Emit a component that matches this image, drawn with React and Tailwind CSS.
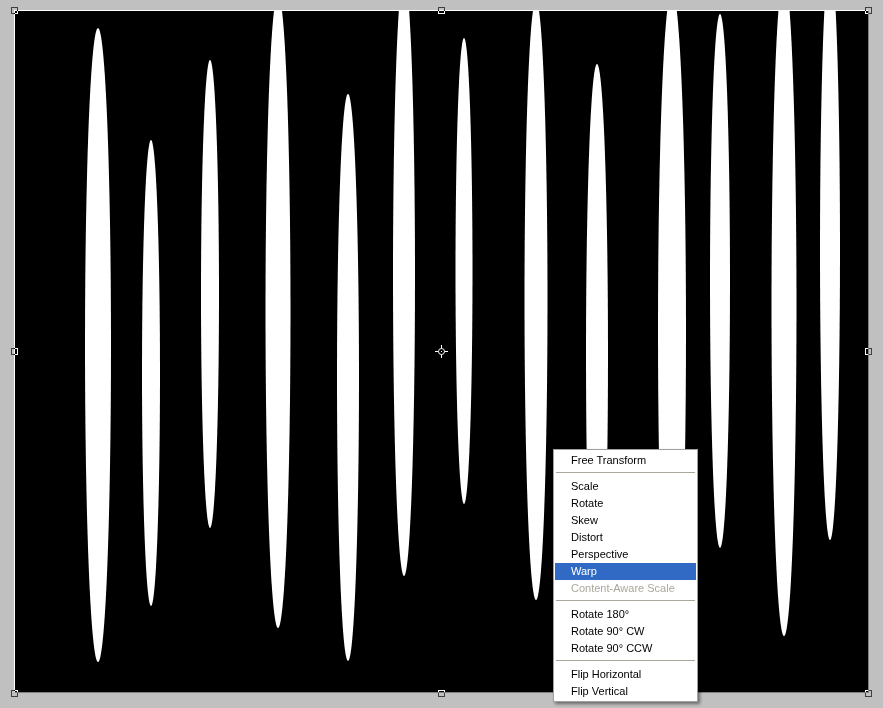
import React from 'react';

const blades = [
  { cx: 98, cy: 345, rx: 13, ry: 317 },
  { cx: 151, cy: 373, rx: 9, ry: 233 },
  { cx: 210, cy: 294, rx: 9, ry: 234 },
  { cx: 278, cy: 311, rx: 12.5, ry: 317 },
  { cx: 348, cy: 377.5, rx: 11, ry: 283.5 },
  { cx: 404, cy: 276, rx: 11, ry: 300 },
  { cx: 464, cy: 271, rx: 8.5, ry: 233 },
  { cx: 536, cy: 300, rx: 11.5, ry: 300 },
  { cx: 597, cy: 354, rx: 11, ry: 290 },
  { cx: 672, cy: 330, rx: 14, ry: 340 },
  { cx: 720, cy: 281, rx: 10, ry: 267 },
  { cx: 784, cy: 306, rx: 12.5, ry: 330 },
  { cx: 830, cy: 250, rx: 10, ry: 290 },
];

const menu = [
  { label: 'Free Transform' },
  { sep: true },
  { label: 'Scale' },
  { label: 'Rotate' },
  { label: 'Skew' },
  { label: 'Distort' },
  { label: 'Perspective' },
  { label: 'Warp', active: true },
  { label: 'Content-Aware Scale', disabled: true },
  { sep: true },
  { label: 'Rotate 180°' },
  { label: 'Rotate 90° CW' },
  { label: 'Rotate 90° CCW' },
  { sep: true },
  { label: 'Flip Horizontal' },
  { label: 'Flip Vertical' },
];

// transform handles, centred on the bounding box edges
const handles = [
  'left-[11px] top-[7px]',
  'left-[438px] top-[7px]',
  'left-[865px] top-[7px]',
  'left-[11px] top-[348px]',
  'left-[865px] top-[348px]',
  'left-[11px] top-[690px]',
  'left-[438px] top-[690px]',
  'left-[865px] top-[690px]',
];

const Handle = ({ pos }) => (
  <div className={`absolute ${pos} w-[7px] h-[7px] border border-white mix-blend-difference`} />
);

const App = () => {
  return (
    <div className="relative w-[883px] h-[708px] overflow-hidden bg-[#c0c0c0] pl-[14px] pt-[10px] font-['Liberation_Sans',Arial,sans-serif]">
      {/* canvas */}
      <div className="w-[855px] h-[683px] border-l border-t border-white border-r border-b border-r-[#808080] border-b-[#808080] bg-black">
        <svg width="853" height="681" viewBox="15 11 853 681" className="block">
          <rect x="15" y="11" width="853" height="681" fill="#000" />
          {blades.map((b, i) => (
            <ellipse key={i} cx={b.cx} cy={b.cy} rx={b.rx} ry={b.ry} fill="#fff" />
          ))}
        </svg>
      </div>

      {handles.map((h) => (
        <Handle key={h} pos={h} />
      ))}

      {/* reference point */}
      <svg className="absolute left-[434px] top-[344px]" width="15" height="15" viewBox="0 0 15 15">
        <circle cx="7.5" cy="7.5" r="3" fill="none" stroke="#fff" strokeWidth="1" />
        <rect x="7" y="7" width="1" height="1" fill="#fff" />
        <path d="M7.5 1v3.5M7.5 10.5V14M1 7.5h3.5M10.5 7.5H14" stroke="#fff" strokeWidth="1" />
      </svg>

      {/* context menu */}
      <div className="absolute left-[553px] top-[449px] w-[145px] bg-white border border-[#a0a0a0] pt-[2px] pb-px shadow-[2px_2px_3px_rgba(0,0,0,0.45)] text-[11px] leading-[17px]">
        {menu.map((item, i) =>
          item.sep ? (
            <div key={i} className="h-[9px] pt-[3px] px-[2px]">
              <div className="h-px bg-[#aca899]" />
            </div>
          ) : (
            <div
              key={i}
              className={
                'h-[17px] mx-px pl-4 whitespace-nowrap ' +
                (item.active
                  ? 'bg-[#316ac5] text-white'
                  : item.disabled
                  ? 'text-[#aca899]'
                  : 'text-black')
              }
            >
              {item.label}
            </div>
          )
        )}
      </div>
    </div>
  );
};

export default App;
